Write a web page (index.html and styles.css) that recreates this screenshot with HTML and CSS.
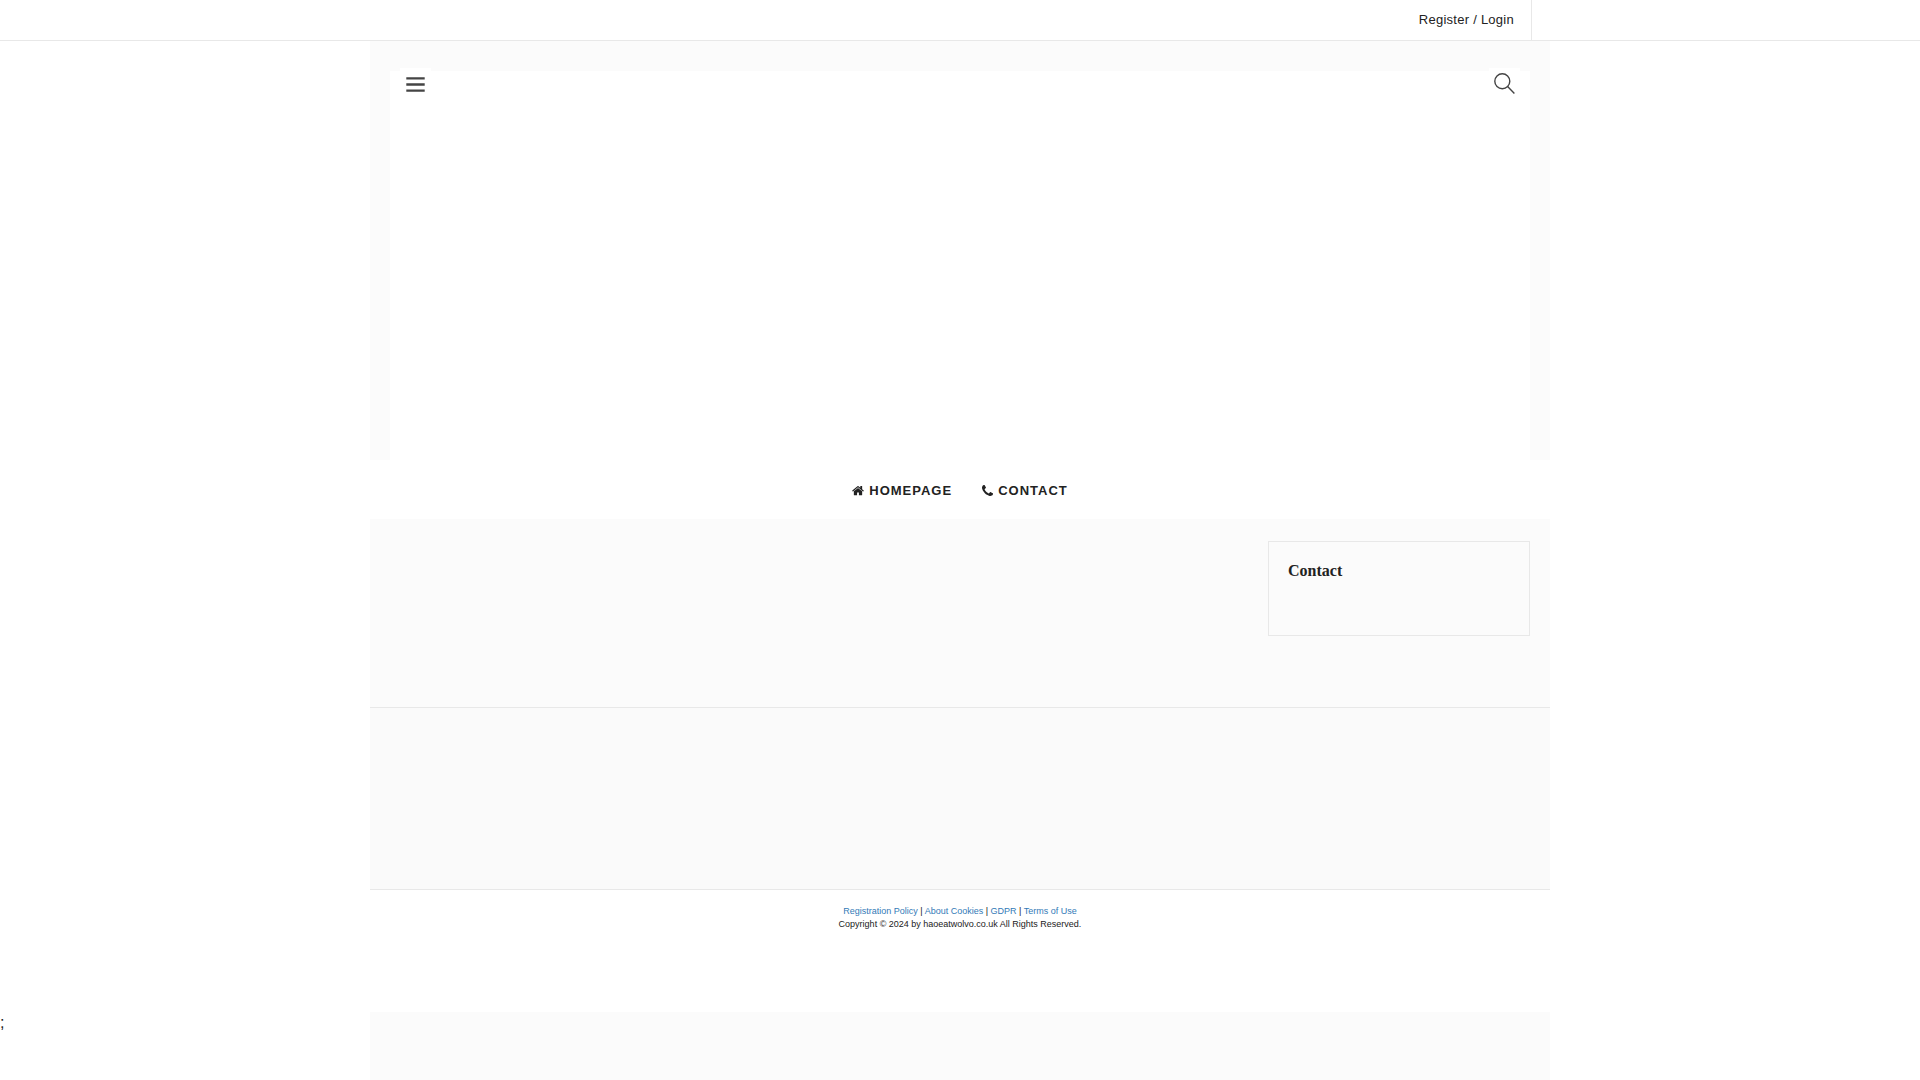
FILE: index.html
```
<!DOCTYPE html>
<html lang="en">
<head>
<meta charset="utf-8">
<title>haoeatwolvo.co.uk</title>
<link rel="stylesheet" href="styles.css">
</head>
<body>
<div class="topbar">
  <div class="topbar-inner">
    <a class="account-link" href="#">Register / Login</a>
  </div>
</div>
<div class="wrapper">
  <header class="header">
    <div class="header-tools">
      <button class="tool tool-menu" type="button" aria-label="Menu">
        <svg width="19" height="16" viewBox="0 0 19 16" fill="#444"><path d="M.3.200h18.400v2.400H.3zM.3 6.300h18.400v2.400H.3zM.3 12.400h18.400v2.400H.3z"/></svg>
      </button>
      <button class="tool tool-search" type="button" aria-label="Search">
        <svg width="21" height="21" viewBox="0 0 21 21" fill="none" stroke="#444" stroke-width="1.4"><circle cx="8.3" cy="8.3" r="7.5"/><path d="M13.6 13.6l6.8 6.8"/></svg>
      </button>
    </div>
    <div class="banner"></div>
  </header>
  <nav class="nav">
    <a class="nav-link" href="#"><svg width="12" height="11" viewBox="0 0 1664 1300" fill="#222"><path d="M1408 768v480q0 26-19 45t-45 19H960V928H704v384H320q-26 0-45-19t-19-45V768q0-1 .5-3t.5-3l575-474 575 474q1 2 1 6zm223-69l-62 74q-8 9-21 11h-3q-13 0-21-7L832 200 140 777q-12 8-24 7-13-2-21-11l-62-74q-8-10-7-23.500T37 654L756 55q32-26 76-26t76 26l244 204V64q0-14 9-23t23-9h192q14 0 23 9t9 23v408l219 182q10 8 11 21.500t-7 23.500z"/></svg>HOMEPAGE</a>
    <a class="nav-link" href="#"><svg width="11" height="11" viewBox="0 0 1408 1408" fill="#222"><path d="M1408 1112q0 27-10 70.500t-21 68.500q-21 50-122 106-94 51-186 51-27 0-52.500-3.500T959 1392t-47.500-14.500T856 1357t-49-18q-98-35-175-83-128-79-264.500-215.500T152 776q-48-77-83-175-3-9-18-49t-20.500-55.500T16 449 3.500 391.500 0 339q0-92 51-186Q107 52 157 31q25-11 68.500-21T296 0q14 0 21 3 18 6 53 76 11 19 30 54t35 63.500 31 53.500q3 4 17.500 25t21.500 35.500 7 28.500q0 20-28.500 50t-62 55-62 53-28.500 46q0 9 5 22.500t8.500 20.500 14 24 11.500 19q76 137 174 235t235 174q2 1 19 11.500t24 14 20.500 8.500 22.500 5q18 0 46-28.500t53-62 55-62 50-28.500q14 0 28.500 7t35.500 21.500 25 17.500q25 15 53.500 31t63.500 35 54 30q70 35 76 53 3 7 3 21z"/></svg>CONTACT</a>
  </nav>
  <div class="content">
    <main class="main"></main>
    <aside class="sidebar">
      <section class="widget"><h2 class="widget-title">Contact</h2></section>
    </aside>
  </div>
  <div class="footer-widgets"></div>
  <footer class="footer">
    <p><a href="#">Registration Policy</a> | <a href="#">About Cookies</a> | <a href="#">GDPR</a> | <a href="#">Terms of Use</a></p>
    <p>Copyright © 2024 by haoeatwolvo.co.uk All Rights Reserved.</p>
  </footer>
</div>
<div class="tail">
  <div class="tail-text">;</div>
  <div class="tail-fill"></div>
</div>
</body>
</html>
```
FILE: styles.css
```
* { box-sizing: border-box; }
html { height: 100%; }
body {
  display: flex;
  flex-direction: column;
  min-height: 100%;
  margin: 0;
  background: #fff;
  color: #222;
  font: 16px/22px "Liberation Sans", Arial, sans-serif;
}
a { color: #337ab7; text-decoration: none; }
p { margin: 0; }
svg { display: block; }

.topbar { border-bottom: 1px solid #e8e8e8; }
.topbar-inner {
  display: flex;
  justify-content: flex-end;
  width: 100%;
  max-width: 1144px;
  margin: 0 auto;
}
.account-link {
  padding: 0 17px;
  border-right: 1px solid #e8e8e8;
  color: #222;
  font-size: 13px;
  line-height: 40px;
  letter-spacing: 0.02em;
}

.wrapper {
  width: 100%;
  max-width: 1180px;
  margin: 0 auto;
  background: #fbfbfb;
}
.header { padding: 27px 20px 0; }
.header-tools {
  display: flex;
  justify-content: space-between;
  padding: 0 10px;
}
.tool {
  display: flex;
  width: 31px;
  height: 32px;
  margin-bottom: -29px;
  padding: 0;
  border: 0;
  background: #fff;
  z-index: 1;
}
.tool-menu { padding: 9px 6px; }
.tool-search { padding: 5px; }
.banner { height: 389px; background: #fff; }

.nav {
  display: flex;
  justify-content: center;
  gap: 30px;
  padding: 21px 20px 19px;
  background: #fff;
}
.nav-link {
  display: flex;
  align-items: center;
  gap: 5px;
  color: #222;
  font-size: 13px;
  font-weight: bold;
  line-height: 19px;
  letter-spacing: 1px;
}

.content {
  display: flex;
  padding: 22px 20px 71px;
}
.main { flex: 1; }
.sidebar { width: 262px; }
.widget {
  padding: 19px 19px 54px;
  border: 1px solid #e8e8e8;
}
.widget-title {
  margin: 0;
  font: bold 16px/20px "Liberation Serif", "Times New Roman", serif;
}
.footer-widgets {
  height: 183px;
  border: 1px solid #e8e8e8;
  border-width: 1px 0;
  background: #fafafa;
}
.footer {
  padding: 15px 20px 81px;
  background: #fff;
  color: #222;
  font-size: 9px;
  line-height: 13px;
  text-align: center;
}

.tail {
  display: grid;
  flex: 1;
  grid-template-columns: 1fr minmax(0, 1180px) 1fr;
}
.tail-fill { background: #fbfbfb; }
```
